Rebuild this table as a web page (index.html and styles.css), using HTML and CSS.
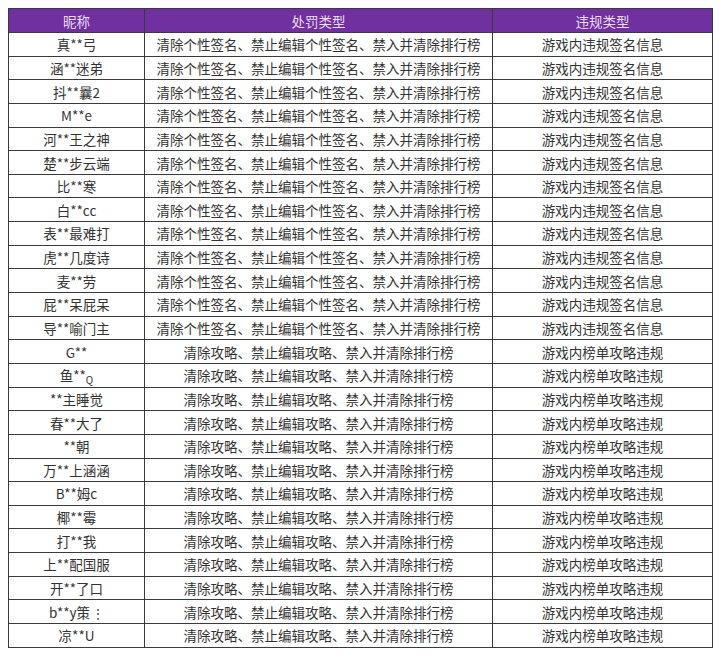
FILE: index.html
```html
<!DOCTYPE html>
<html lang="zh-CN">
<head>
<meta charset="utf-8">
<title>违规处罚名单</title>
<link rel="stylesheet" href="styles.css">
</head>
<body>
<table class="list">
<colgroup><col class="c1"><col class="c2"><col class="c3"></colgroup>
<thead>
<tr><th>昵称</th><th>处罚类型</th><th>违规类型</th></tr>
</thead>
<tbody>
<tr><td>真**弓</td><td>清除个性签名、禁止编辑个性签名、禁入并清除排行榜</td><td>游戏内违规签名信息</td></tr>
<tr><td>涵**迷弟</td><td>清除个性签名、禁止编辑个性签名、禁入并清除排行榜</td><td>游戏内违规签名信息</td></tr>
<tr><td>抖**曩2</td><td>清除个性签名、禁止编辑个性签名、禁入并清除排行榜</td><td>游戏内违规签名信息</td></tr>
<tr><td>M**e</td><td>清除个性签名、禁止编辑个性签名、禁入并清除排行榜</td><td>游戏内违规签名信息</td></tr>
<tr><td>河**王之神</td><td>清除个性签名、禁止编辑个性签名、禁入并清除排行榜</td><td>游戏内违规签名信息</td></tr>
<tr><td>楚**步云端</td><td>清除个性签名、禁止编辑个性签名、禁入并清除排行榜</td><td>游戏内违规签名信息</td></tr>
<tr><td>比**寒</td><td>清除个性签名、禁止编辑个性签名、禁入并清除排行榜</td><td>游戏内违规签名信息</td></tr>
<tr><td>白**cc</td><td>清除个性签名、禁止编辑个性签名、禁入并清除排行榜</td><td>游戏内违规签名信息</td></tr>
<tr><td>表**最难打</td><td>清除个性签名、禁止编辑个性签名、禁入并清除排行榜</td><td>游戏内违规签名信息</td></tr>
<tr><td>虎**几度诗</td><td>清除个性签名、禁止编辑个性签名、禁入并清除排行榜</td><td>游戏内违规签名信息</td></tr>
<tr><td>麦**劳</td><td>清除个性签名、禁止编辑个性签名、禁入并清除排行榜</td><td>游戏内违规签名信息</td></tr>
<tr><td>屁**呆屁呆</td><td>清除个性签名、禁止编辑个性签名、禁入并清除排行榜</td><td>游戏内违规签名信息</td></tr>
<tr><td>导**喻门主</td><td>清除个性签名、禁止编辑个性签名、禁入并清除排行榜</td><td>游戏内违规签名信息</td></tr>
<tr><td>G**</td><td>清除攻略、禁止编辑攻略、禁入并清除排行榜</td><td>游戏内榜单攻略违规</td></tr>
<tr><td>鱼**<span class="sub">Q</span></td><td>清除攻略、禁止编辑攻略、禁入并清除排行榜</td><td>游戏内榜单攻略违规</td></tr>
<tr><td>**主睡觉</td><td>清除攻略、禁止编辑攻略、禁入并清除排行榜</td><td>游戏内榜单攻略违规</td></tr>
<tr><td>春**大了</td><td>清除攻略、禁止编辑攻略、禁入并清除排行榜</td><td>游戏内榜单攻略违规</td></tr>
<tr><td>**朝</td><td>清除攻略、禁止编辑攻略、禁入并清除排行榜</td><td>游戏内榜单攻略违规</td></tr>
<tr><td>万**上涵涵</td><td>清除攻略、禁止编辑攻略、禁入并清除排行榜</td><td>游戏内榜单攻略违规</td></tr>
<tr><td>B**姆c</td><td>清除攻略、禁止编辑攻略、禁入并清除排行榜</td><td>游戏内榜单攻略违规</td></tr>
<tr><td>椰**霉</td><td>清除攻略、禁止编辑攻略、禁入并清除排行榜</td><td>游戏内榜单攻略违规</td></tr>
<tr><td>打**我</td><td>清除攻略、禁止编辑攻略、禁入并清除排行榜</td><td>游戏内榜单攻略违规</td></tr>
<tr><td>上**配国服</td><td>清除攻略、禁止编辑攻略、禁入并清除排行榜</td><td>游戏内榜单攻略违规</td></tr>
<tr><td>开**了口</td><td>清除攻略、禁止编辑攻略、禁入并清除排行榜</td><td>游戏内榜单攻略违规</td></tr>
<tr><td>b**y策<span class="dots">⋮</span></td><td>清除攻略、禁止编辑攻略、禁入并清除排行榜</td><td>游戏内榜单攻略违规</td></tr>
<tr><td>凉**U</td><td>清除攻略、禁止编辑攻略、禁入并清除排行榜</td><td>游戏内榜单攻略违规</td></tr>
</tbody>
</table>
</body>
</html>
```
FILE: styles.css
```css
html, body {
  margin: 0;
  padding: 0;
  background: #ffffff;
}
body {
  padding: 8px;
  font-family: "Noto Sans CJK SC", "Noto Sans", sans-serif;
}
.list {
  width: 704px;
  border-collapse: collapse;
  table-layout: fixed;
  font-size: 13.5px;
  color: #333333;
}
.c1 { width: 136px; }
.c2 { width: 348px; }
.c3 { width: 220px; }
.list th {
  height: 23px;
  padding: 0;
  background: #7030a0;
  color: #eadcf6;
  font-weight: normal;
  text-align: center;
  border: 1px solid #3a3a3a;
  line-height: 18px;
}
.list td {
  height: 22.65px;
  padding: 0;
  text-align: center;
  border: 1px solid #3a3a3a;
  line-height: 18px;
  white-space: nowrap;
  overflow: hidden;
}
.sub {
  font-size: 10px;
  line-height: 10px;
  vertical-align: -3px;
}
.dots {
  font-size: 12px;
  line-height: 12px;
  margin-left: 2px;
}
```
